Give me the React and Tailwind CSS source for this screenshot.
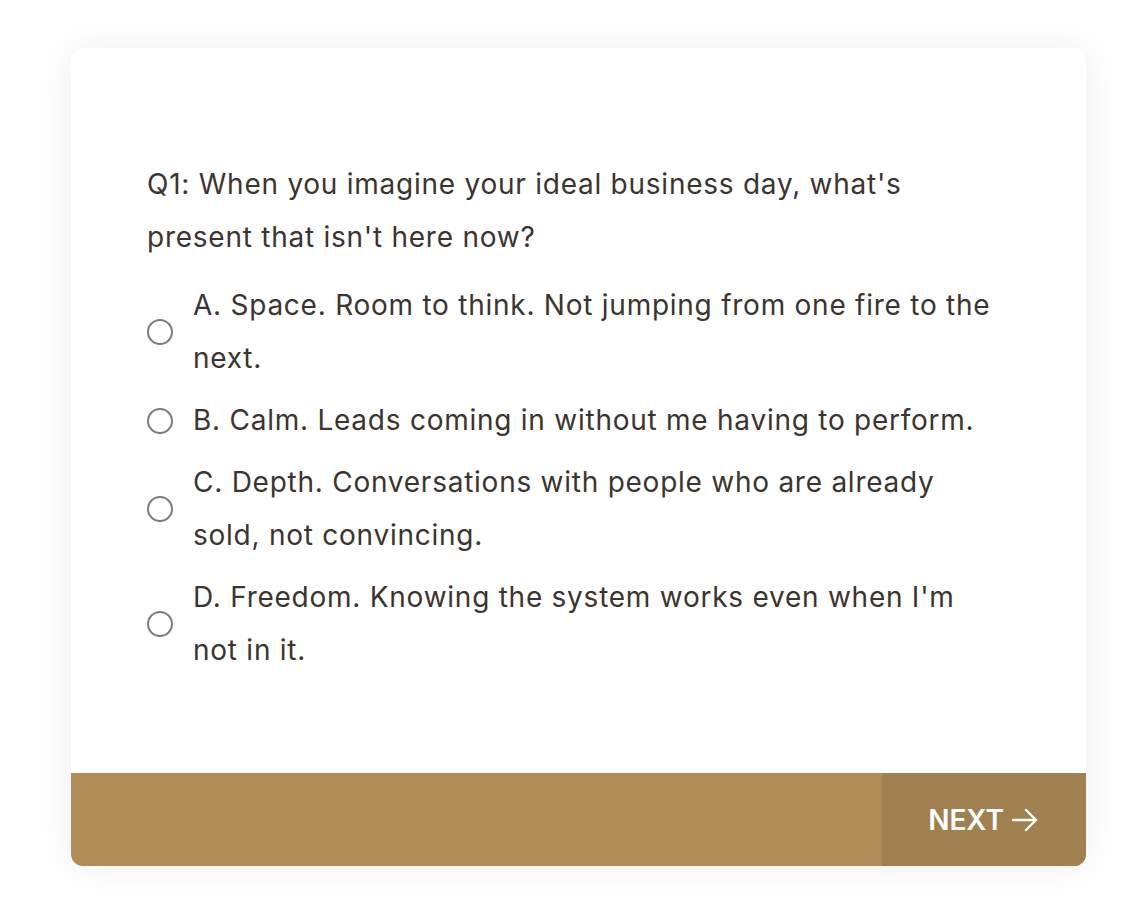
import React, { useState } from "react";

const options = [
  "A. Space. Room to think. Not jumping from one fire to the next.",
  "B. Calm. Leads coming in without me having to perform.",
  "C. Depth. Conversations with people who are already sold, not convincing.",
  "D. Freedom. Knowing the system works even when I'm not in it.",
];

export default function App() {
  const [picked, setPicked] = useState(null);

  return (
    <div className="min-h-[915px] bg-white pt-[48px] px-[71px] font-['Inter',sans-serif]">
      <div className="w-[1015px] rounded-[12px] bg-white shadow-[0_0_40px_rgba(0,0,0,0.07)] overflow-hidden">
        {/* 質問 */}
        <div className="pt-[110px] pb-[96px] pl-[76px] pr-[90px] text-[#3b3431] text-[28px] leading-[53px] tracking-[0.75px]">
          <p className="mb-[15px]">
            Q1: When you imagine your ideal business day, what's present that isn't here now?
          </p>
          <div className="flex flex-col gap-[9px]">
            {options.map((o, i) => (
              <label
                key={i}
                onClick={() => setPicked(i)}
                className="flex items-center gap-[20px] cursor-pointer"
              >
                <span className="shrink-0 w-[26px] h-[26px] rounded-full border-2 border-[#7d7d7d] flex items-center justify-center">
                  {picked === i && <span className="w-[14px] h-[14px] rounded-full bg-[#a0804e]" />}
                </span>
                <span>{o}</span>
              </label>
            ))}
          </div>
        </div>

        {/* フッター */}
        <div className="flex h-[93px] bg-[#b08d57]">
          <div className="flex-1" />
          <button className="w-[204px] bg-[#a0804e] text-white text-[28px] font-semibold flex items-center justify-center gap-[6px]">
            NEXT
            <svg width="30" height="26" viewBox="0 0 30 26" fill="none" stroke="white" strokeWidth="2.4" strokeLinecap="round" strokeLinejoin="round">
              <path d="M3 13h23M16 3l10 10-10 10" />
            </svg>
          </button>
        </div>
      </div>
    </div>
  );
}
